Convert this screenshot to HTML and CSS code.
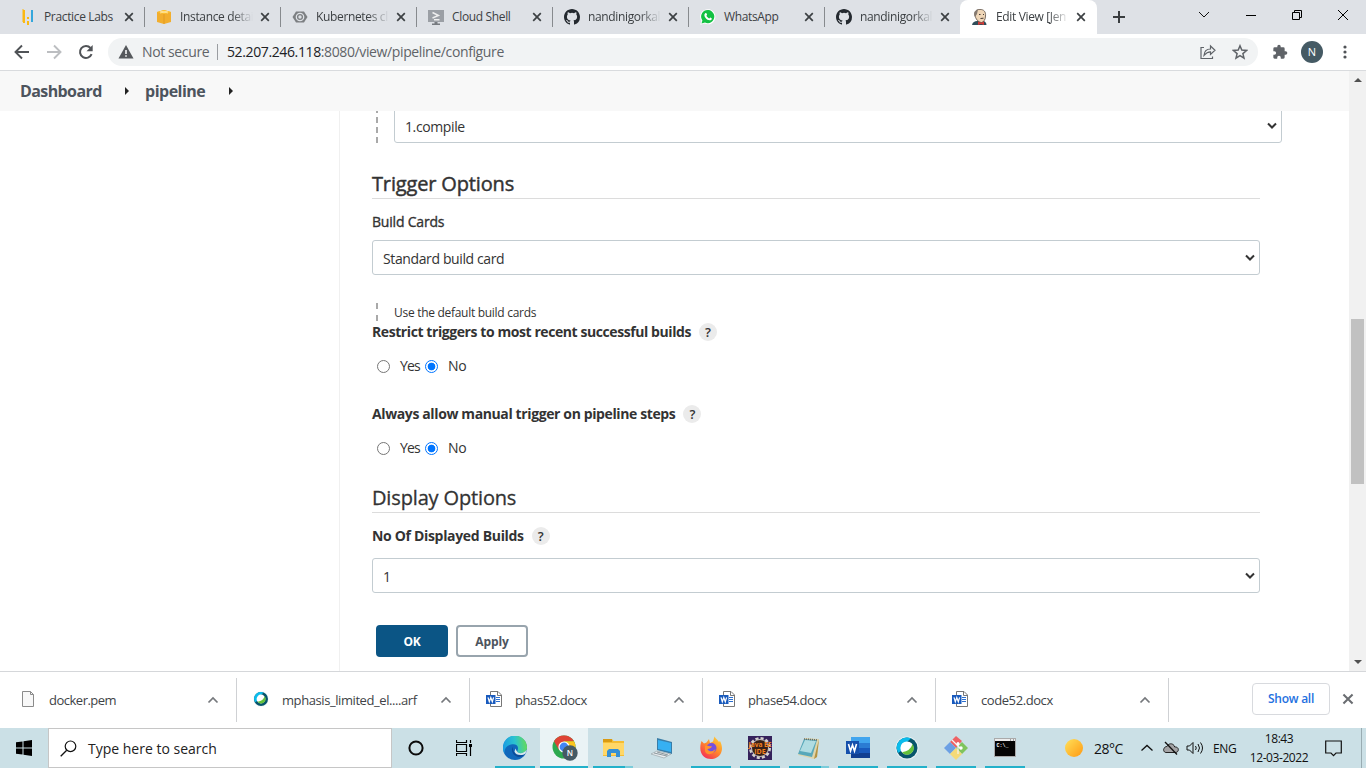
FILE: index.html
```html
<!DOCTYPE html>
<html lang="en">
<head>
<meta charset="utf-8">
<title>Edit View [Jenkins]</title>
<link rel="stylesheet" href="styles.css">
</head>
<body>
<svg class="defs" width="0" height="0">
  <defs>
    <symbol id="x" viewBox="0 0 10 10"><path d="M1.2 1.2 8.8 8.8M8.8 1.2 1.2 8.8" fill="none" stroke="currentColor" stroke-width="1.7"/></symbol>
    <symbol id="github" viewBox="0 0 16 16"><path fill="#24292f" d="M8 0C3.58 0 0 3.58 0 8c0 3.54 2.29 6.53 5.47 7.59.4.07.55-.17.55-.38 0-.19-.01-.82-.01-1.49-2.01.37-2.53-.49-2.69-.94-.09-.23-.48-.94-.82-1.13-.28-.15-.68-.52-.01-.53.63-.01 1.08.58 1.23.82.72 1.21 1.87.87 2.33.66.07-.52.28-.87.51-1.07-1.78-.2-3.64-.89-3.64-3.95 0-.87.31-1.59.82-2.15-.08-.2-.36-1.02.08-2.12 0 0 .67-.21 2.2.82a7.6 7.6 0 0 1 4 0c1.53-1.04 2.2-.82 2.2-.82.44 1.1.16 1.92.08 2.12.51.56.82 1.27.82 2.15 0 3.07-1.87 3.75-3.65 3.95.29.25.54.73.54 1.48 0 1.07-.01 1.93-.01 2.2 0 .21.15.46.55.38A8.01 8.01 0 0 0 16 8c0-4.42-3.58-8-8-8z"/></symbol>
    <symbol id="docx" viewBox="0 0 16 16"><path d="M4.500.5h7.500l3.500 3.500v11.500h-11z" fill="#fff" stroke="#777"/><path d="M11.500.5v4h4" fill="none" stroke="#777"/><path d="M10 6.500h4M10 8.500h4M10 10.500h4" stroke="#2b6fd0"/><rect y="4" width="9.500" height="9" fill="#185abd"/><path d="m2 6.300 1.300 4.400 1.500-4.200 1.500 4.200 1.300-4.400" fill="none" stroke="#fff" stroke-width="1.200"/></symbol>
    <symbol id="up" viewBox="0 0 12 8"><path d="M1.500 6.500 6 2l4.500 4.500" fill="none" stroke="currentColor" stroke-width="1.700"/></symbol>
    <symbol id="webex" viewBox="0 0 24 24"><circle cx="12" cy="12" r="11.500" fill="#eef5f7" opacity=".8"/><circle cx="12" cy="12" r="10.500" fill="#07556b"/><path d="M1.500 12A10.500 10.500 0 0 1 16 2.300L12 6 6 15 3 17z" fill="#0bbcec"/><circle cx="12" cy="12" r="6.600" fill="#fff"/><path d="M17.500 8A6.600 6.600 0 0 1 7 16.200Q15.500 15 17.500 8z" fill="#64c13a"/></symbol>
    <symbol id="down" viewBox="0 0 10 8"><path d="M1 1.500 5 5.500 9 1.500" fill="none" stroke="#333" stroke-width="2"/></symbol>
  </defs>
</svg>

<header class="tabs">
  <div class="tab"><svg class="fav" viewBox="0 0 16 16"><path d="M4 1v13M8 12v4" stroke="#fbb913" stroke-width="2"/><path d="M8 8v2" stroke="#fbb913" stroke-width="2"/><path d="M3 0v13" stroke="#fbb913"/><path d="M12 1v12" stroke="#35a7dc" stroke-width="2"/></svg><span class="title">Practice Labs</span><svg class="close"><use href="#x"/></svg></div>
  <div class="tab"><svg class="fav" viewBox="0 0 16 16"><path d="m8 1 7 2v10l-7 2-7-2V3z" fill="#f2ae2e"/><path d="m8 1 7 2-7 2-7-2z" fill="#ffc22e"/><path d="M8 5v10" stroke="#dc941c" stroke-width=".7"/><path d="m4 2 8 2M12 2 4 4" stroke="#fff0c0" stroke-width=".7"/></svg><span class="title">Instance detai</span><svg class="close"><use href="#x"/></svg></div>
  <div class="tab"><svg class="fav" viewBox="0 0 16 16"><path d="M4 2.500h8l3.500 5.500-3.500 5.500H4L.5 8z" fill="#7c7f82"/><circle cx="8" cy="8" r="3.700" fill="none" stroke="#dee1e6" stroke-width="1.300"/><circle cx="8" cy="8" r="1.700" fill="#dee1e6"/></svg><span class="title">Kubernetes cl</span><svg class="close"><use href="#x"/></svg></div>
  <div class="tab"><svg class="fav" viewBox="0 0 16 16"><path d="M0 1h16v12H0z" fill="#9b9fa5"/><path d="M6.500 13h3v1.500H12V16H4v-1.500h2.500z" fill="#777b80"/><path d="m4.500 3.500 6 3-6 2.500M6 10.800h5.500" stroke="#eee" stroke-width="1.400" fill="none"/></svg><span class="title t-plain">Cloud Shell</span><svg class="close"><use href="#x"/></svg></div>
  <div class="tab"><svg class="fav"><use href="#github"/></svg><span class="title">nandinigorkal</span><svg class="close"><use href="#x"/></svg></div>
  <div class="tab"><svg class="fav" viewBox="0 0 16 16"><path d="M.3 15.700 1.500 12A7.600 7.600 0 1 1 4.500 14.600z" fill="#fff"/><path d="m1.500 14.500.9-3A6.600 6.600 0 1 1 5 13.600z" fill="#13c143"/><path d="M5.200 4.200c1-.6 1.300-.1 1.900 1.500l-.7 1c.7 1.300 1.500 2.100 2.900 2.700l.9-1c1.700.8 2 .9 1.400 2-1.500 1.800-4.500.6-6-1.400C4.300 7.300 3.800 5.400 5.200 4.200z" fill="#fff"/></svg><span class="title t-plain">WhatsApp</span><svg class="close"><use href="#x"/></svg></div>
  <div class="tab last"><svg class="fav"><use href="#github"/></svg><span class="title">nandinigorkal</span><svg class="close"><use href="#x"/></svg></div>
  <div class="tab active"><svg class="fav" viewBox="0 0 16 16"><path d="M0 16c.5-3 3-4 5-4h6c2 0 3.500 2 3.500 4z" fill="#2f4d59"/><path d="M3 6C2 2 5 .4 8 .4c4 0 6 2.600 5.500 6.600 0 4-2 6-4 6.500C6 13 3.500 10 3 6z" fill="#efd6b7" stroke="#5b4c42" stroke-width=".8"/><path d="M3 8C.8 5 3 1 6 .6L5 5z" fill="#857a70"/><path d="M7 5.500h1.500M11 5.500h1M8.500 9.500l3-.3" stroke="#463a34"/><path d="m6 12.500 3 1.300 3-1.300V16l-3-1-3 1z" fill="#d23a36"/></svg><span class="title">Edit View [Jen</span><svg class="close"><use href="#x"/></svg></div>
  <svg class="plus" viewBox="0 0 12 12"><path d="M6 0v12M0 6h12" stroke="#3a3d40" stroke-width="2"/></svg>
  <div class="winctl">
    <svg width="12" height="12" viewBox="0 0 12 12"><path d="m1 3 5 5 5-5" fill="none" stroke="#111"/></svg>
    <svg width="10" height="12" viewBox="0 0 10 12"><path d="M0 6.500h10" stroke="#000"/></svg>
    <svg width="10" height="12" viewBox="0 0 10 12"><path d="M.5 3.500h7v7h-7zM2.500 3.500v-2h7v7h-2" fill="none" stroke="#000"/></svg>
    <svg width="10" height="12" viewBox="0 0 10 12"><path d="m0 1 10 10M10 1 0 11" stroke="#000"/></svg>
  </div>
</header>

<nav class="toolbar">
  <svg class="nav" viewBox="0 0 16 16"><path d="M15 8H2M8 1.500 1.500 8 8 14.500" fill="none" stroke="#505357" stroke-width="1.900"/></svg>
  <svg class="nav" viewBox="0 0 16 16"><path d="M1 8h13M8 1.500 14.500 8 8 14.500" fill="none" stroke="#bcbec1" stroke-width="1.900"/></svg>
  <svg class="nav" viewBox="0 0 16 16"><path d="M13.600 10.200A6 6 0 1 1 12.500 4" fill="none" stroke="#505357" stroke-width="2"/><path d="M14.700 1v6.200H8.500z" fill="#505357"/></svg>
  <div class="omnibox">
    <svg width="16" height="14" viewBox="0 0 16 14"><path d="M8 0 15.500 13.500H.5z" fill="#55585c"/><path d="M8 5v4M8 10.200v1.600" stroke="#fff" stroke-width="1.500"/></svg>
    <span class="insecure">Not secure</span><span class="bar"></span>
    <span class="url"><b>52.207.246.118</b>:8080/view/pipeline/configure</span>
    <svg class="share" width="16" height="16" viewBox="0 0 16 16"><path d="M4 3.500H1v11h11.500v-2M4 11.500c.3-4.500 3-6.500 6.500-6.500V2l4.500 4.200-4.500 4.200V7.800C8 7.800 6 9 4 11.500z" fill="none" stroke="#5f6368" stroke-width="1.200"/></svg>
    <svg width="16" height="16" viewBox="0 0 16 16"><path d="m8 1.800 1.800 4.300 4.700.4-3.600 3.100 1.100 4.600L8 11.700l-4 2.500 1.100-4.600-3.600-3.100 4.700-.4z" fill="none" stroke="#5f6368" stroke-width="1.500"/></svg>
  </div>
  <svg class="puzzle" viewBox="0 0 24 24"><path fill="#5f6368" d="M20.500 11H19V7a2 2 0 0 0-2-2h-4V3.500a2.500 2.500 0 0 0-5 0V5H4a2 2 0 0 0-2 2v3.800h1.500a2.700 2.700 0 0 1 0 5.400H2V20c0 1.100.9 2 2 2h3.800v-1.500a2.700 2.700 0 0 1 5.400 0V22H17a2 2 0 0 0 2-2v-4h1.500a2.500 2.500 0 0 0 0-5z"/></svg>
  <span class="avatar">N</span>
  <svg class="dots" viewBox="0 0 4 14"><g fill="#505357"><circle cx="2" cy="2" r="1.600"/><circle cx="2" cy="7" r="1.600"/><circle cx="2" cy="12" r="1.600"/></g></svg>
</nav>

<div class="viewport">
  <div class="page">
    <div class="crumbs"><span class="c1">Dashboard</span><i></i><span class="c2">pipeline</span><i></i></div>
    <div class="columns">
      <aside></aside>
      <main>
        <div class="nested"><div class="select clipped"><span class="v-compile">1.compile</span><svg class="chev"><use href="#down"/></svg></div></div>
        <h2 class="h-trigger">Trigger Options</h2>
        <div class="label medium"><span>Build Cards</span></div>
        <div class="select"><span>Standard build card</span><svg class="chev"><use href="#down"/></svg></div>
        <div class="note"><span>Use the default build cards</span></div>
        <div class="question"><span class="q1">Restrict triggers to most recent successful builds</span><span class="help">?</span></div>
        <div class="radios"><i class="radio"></i><span class="yes">Yes</span><i class="radio on"></i><span class="no">No</span></div>
        <div class="question second"><span class="q2">Always allow manual trigger on pipeline steps</span><span class="help">?</span></div>
        <div class="radios"><i class="radio"></i><span class="yes">Yes</span><i class="radio on"></i><span class="no">No</span></div>
        <h2 class="h-display">Display Options</h2>
        <div class="label"><span class="q3">No Of Displayed Builds</span><span class="help">?</span></div>
        <div class="select"><span>1</span><svg class="chev"><use href="#down"/></svg></div>
        <div class="buttons"><span class="btn primary">OK</span><span class="btn">Apply</span></div>
      </main>
    </div>
  </div>
  <div class="scroll"><i class="arr up"></i><i class="thumb"></i><i class="arr dn"></i></div>
</div>

<section class="downloads">
  <div class="dl"><svg class="dicon" viewBox="0 0 16 16"><path d="M2.500.5h8l3 3v12h-11z" fill="#f8f8f8" stroke="#8b8b8b"/><path d="M10.500.5v3h3" fill="none" stroke="#8b8b8b"/></svg><span class="d1">docker.pem</span><svg class="caret"><use href="#up"/></svg></div>
  <div class="dl"><svg class="dicon"><use href="#webex"/></svg><span class="d2">mphasis_limited_el....arf</span><svg class="caret"><use href="#up"/></svg></div>
  <div class="dl"><svg class="dicon"><use href="#docx"/></svg><span class="d3">phas52.docx</span><svg class="caret"><use href="#up"/></svg></div>
  <div class="dl"><svg class="dicon"><use href="#docx"/></svg><span class="d3">phase54.docx</span><svg class="caret"><use href="#up"/></svg></div>
  <div class="dl"><svg class="dicon"><use href="#docx"/></svg><span class="d3">code52.docx</span><svg class="caret"><use href="#up"/></svg></div>
  <span class="showall">Show all</span>
  <svg class="dclose"><use href="#x"/></svg>
</section>

<footer class="taskbar">
  <div class="start"><svg width="16" height="16" viewBox="0 0 16 16"><path d="M0 2.300 6.500 1.400v6.100H0zM7.500 1.200 16 0v7.500H7.500zM0 8.500h6.500v6.100L0 13.700zM7.500 8.500H16V16l-8.500-1.200z"/></svg></div>
  <div class="search"><svg width="17" height="17" viewBox="0 0 17 17"><circle cx="10.500" cy="6.300" r="5.300" fill="none" stroke="#111" stroke-width="1.200"/><path d="M6.700 10.200.7 16.200" stroke="#111" stroke-width="1.300"/></svg><span>Type here to search</span></div>
  <div class="sys"><svg width="16" height="16" viewBox="0 0 16 16"><circle cx="8" cy="8" r="6.600" fill="none" stroke="#0b0b0b" stroke-width="2"/></svg></div>
  <div class="sys"><svg width="16" height="16" viewBox="0 0 16 16"><path d="M.5 0v2.500h10V0M.5 16v-2.500h10V16M.5 4.500h10v7H.5zM14.500 0v3M14.500 7v9" fill="none" stroke="#000" stroke-width="1.200"/><path d="M13 4h3v3h-3z"/></svg></div>
  <div class="apps">
    <div class="app run"><svg viewBox="0 0 24 24"><defs><linearGradient id="eg" x1="0" y1=".4" x2="1" y2=".3"><stop stop-color="#1b9de2"/><stop offset=".5" stop-color="#2cc3cf"/><stop offset="1" stop-color="#67dc54"/></linearGradient></defs><circle cx="12" cy="12" r="12" fill="#1068bb"/><path d="M0 12A12 12 0 0 1 24 11c.4 5-5 7.500-9 5.500-1.500-1 0-2 0-4.500 0-3-3-4.500-7-3.500-5 1.300-7 5-6.500 9C.3 15.500 0 14 0 12z" fill="url(#eg)"/><path d="M10 11c-3 3 1 10 6 10 3 0 5-1.500 6-3-5 3-13 .5-12-7z" fill="#0c4a98"/><path d="M15 16.500c2.500 1.300 6 .8 9-3l-1.500 4c-4 3-10 1.500-11-2l1-3c.8 2 1 2.500 2.500 4z" fill="#d9e9ec"/></svg></div>
    <div class="app run current"><svg viewBox="0 0 26 26"><circle cx="12" cy="12" r="11.500" fill="#2da94f"/><path d="M2 6.300A11.500 11.500 0 0 1 22 6.300H12L7 15z" fill="#df4335"/><path d="M12 6.300h10A11.500 11.500 0 0 1 12 23.500L17 14z" fill="#fcc51c"/><circle cx="12" cy="12" r="5.600" fill="#fff"/><circle cx="12" cy="12" r="4.400" fill="#4285f4"/><circle cx="18" cy="18" r="7.700" fill="#455a64"/><text x="18" y="21.200" class="ntext">N</text></svg></div>
    <div class="app run split"><svg viewBox="0 0 24 24"><path d="M2 3h9l1.500 2H23v15H2z" fill="#f5bd33"/><path d="M2 3h9v3H2z" fill="#d99a13"/><path d="M2 7h21v12H2z" fill="#ffd767"/><path d="M6 21v-6l2-2h9l2 2v6h-4v-4h-5v4z" fill="#3590d4"/></svg></div>
    <div class="app"><svg viewBox="0 0 24 24"><path d="m7 2 15 4v12L7 14z" fill="#397da8"/><path d="m8 4 13 3v9L8 13z" fill="#36b0f2"/><path d="m7 15 14 3-7 4-13-4z" fill="#e9edf0" stroke="#9ba7ac" stroke-width=".7"/><path d="m4 17 13 3M7 16l11 3" stroke="#8d999e"/></svg></div>
    <div class="app run"><svg viewBox="0 0 24 24"><defs><linearGradient id="fg" x1=".9" y1="0" x2=".2" y2="1"><stop stop-color="#ffd43a"/><stop offset=".5" stop-color="#ff8a2b"/><stop offset="1" stop-color="#f42b59"/></linearGradient></defs><path d="M2.500 5 5 7.500l2.500-1L10 3l1 4 3-1.500L15.500.5C17 3 19 4 20 6l1-1c2.500 5 2.500 9 1 12-2 4-6 6-10 6-5.500 0-9.500-3.500-10.500-8.500C1 11 1.500 8 2.500 5z" fill="url(#fg)"/><circle cx="12.500" cy="12" r="5" fill="#7550df"/><path d="M6 10c2-1.500 4 .7 7 .3-1.500 3-3.500 2-4.500 3.200 2 2.500 5 2.500 8-.5-1.500 6-9 7-10.500 2z" fill="#ff922e"/></svg></div>
    <div class="app run"><svg viewBox="0 0 24 24"><path d="M0 0h24v24H0z" fill="#35225b"/><circle cx="12" cy="12" r="9.500" fill="none" stroke="#d5d2ce" stroke-width="3" stroke-dasharray="3 2"/><circle cx="12" cy="12" r="8.500" fill="#372018" stroke="#c7c4c1"/><text x="12" y="11" class="jtext" textLength="23" lengthAdjust="spacingAndGlyphs">Java EE</text><text x="12" y="18" class="jtext">IDE</text></svg></div>
    <div class="app run split"><svg viewBox="0 0 24 24"><path d="m8 2 14 1-2 18-3 2-16-4z" fill="#dfd5ab"/><path d="m7 3 13 1-5 17-14-3z" fill="#58a8ba"/><path d="m8 4 11 1-5 12-11-2z" fill="#b0dce2"/><path d="m7 3 14 1" stroke="#6c6b64" stroke-width="1.500" stroke-dasharray="1 1"/><path d="M22 3l-2 18-3 2z" fill="#b49343"/></svg></div>
    <div class="app run"><svg viewBox="0 0 24 24"><path d="M5 1h19v7H5z" fill="#41a5ee"/><path d="M5 7h19v6H5z" fill="#2b7cd3"/><path d="M5 12h19v5H5z" fill="#185abd"/><path d="M5 17h19v5H5z" fill="#103f91"/><path d="M0 5h13v13H0z" fill="#1550ac"/><path d="m2.500 8 2 7 2-6 2 6 2-7" fill="none" stroke="#fff" stroke-width="1.600"/></svg></div>
    <div class="app run"><svg viewBox="0 0 24 24"><use href="#webex"/></svg></div>
    <div class="app run"><svg viewBox="0 0 24 24"><path d="m12 0 6 5-6 7-6-6z" fill="#ee6264"/><path d="m6 6 6 6-6 6-6-6z" fill="#6ca0e4"/><path d="m18 6 6 6-6 6-6-6z" fill="#80c45c"/><path d="m12 12 6 6-6 6-6-6z" fill="#f5da78"/><path d="m8 4 9 9M14 6v12" stroke="#f4f4f4" stroke-width="1.200"/><circle cx="14" cy="8" r="1.700" fill="#fff"/><circle cx="17" cy="12" r="1.700" fill="#fff"/></svg></div>
    <div class="app run"><svg viewBox="0 0 24 24"><path d="M1 2h22v19H1z" fill="#aaa"/><path d="M2 5h20v15H2z" fill="#050505"/><path d="M2 3h20v2H2z" fill="#ececec"/><path d="M17 4h1M20 4h1" stroke="#555"/><text x="3.500" y="10.500" class="ctext">C:\_</text></svg></div>
  </div>
  <svg class="sun" viewBox="0 0 18 18"><defs><linearGradient id="sg" x1="0" y1="0" x2="1" y2="1"><stop stop-color="#ffe15a"/><stop offset="1" stop-color="#ff9912"/></linearGradient></defs><circle cx="9" cy="9" r="9" fill="url(#sg)"/></svg>
  <span class="temp">28°C</span>
  <svg class="t-up" viewBox="0 0 12 8"><path d="m.5 6.500 5.500-5 5.500 5" fill="none" stroke="#111" stroke-width="1.300"/></svg>
  <svg class="t-cloudoff" viewBox="0 0 16 14"><path d="M4 11.500C1 12 0 9 1 7.500 1.500 6 3 5.500 4 5.500 5 3 8 2 10 3.500c1 .7 1.500 1.500 1.700 2.500 3-.3 4.300 2 3.300 4-.5 1-1.500 1.500-3 1.500z" fill="#a4a4a6" stroke="#222"/><path d="m2 1 12 12.500" stroke="#111" stroke-width="1.300"/></svg>
  <svg class="t-sound" viewBox="0 0 18 14"><path d="M1 5h2.500L7 1.500v11L3.500 9H1z" fill="none" stroke="#111"/><path d="M9.500 5q1.500 2 0 4M12 3q3 4 0 8M14.500 1.500q4 5.500 0 11" fill="none" stroke="#111"/></svg>
  <span class="lang">ENG</span>
  <div class="clock"><span class="time">18:43</span><span class="date">12-03-2022</span></div>
  <svg class="t-note" viewBox="0 0 17 17"><path d="M.7 1h15.600v12H11l-2.500 2.700L6 13H.7z" fill="none" stroke="#111" stroke-width="1.200"/></svg>
  <i class="peek"></i>
</footer>
</body>
</html>
```
FILE: styles.css
```css
* { box-sizing: border-box; }
html, body { margin: 0; height: 100%; overflow: hidden; }
body {
  width: 1366px; height: 768px; display: flex; flex-direction: column;
  background: #fff; color: #333; font-family: "Open Sans", "Noto Sans", sans-serif; font-size: 14px;
}
svg { display: block; flex: none; }
svg.defs { position: absolute; }
span { white-space: nowrap; }

/* browser tabs */
.tabs { height: 34px; flex: none; display: flex; align-items: center; background: #dee1e6; padding-left: 8px; }
.tab { width: 136px; height: 34px; flex: none; display: flex; align-items: center; padding-left: 12px; }
.tab::after { content: ""; flex: none; width: 1px; height: 20px; background: #878a8e; margin-left: 10px; }
.tab.last::after, .tab.active::after { display: none; }
.fav { width: 16px; height: 16px; }
.title { flex: none; width: 76px; margin: 0 4px 0 8px; font-size: 12px; line-height: 16px; letter-spacing: -0.35px; color: #3c4043; mask-image: linear-gradient(90deg, #000 52px, transparent 73px); }
.tab:first-child .title, .t-plain { mask-image: none; }
.close { width: 10px; height: 10px; color: #3c4043; }
.active { width: 137px; background: #fff; border-radius: 8px 8px 0 0; }
.plus { width: 12px; height: 12px; margin-left: 16px; }
.winctl { margin-left: auto; display: flex; gap: 36px; padding: 0 18px 5px 0; }

/* address bar */
.toolbar { height: 37px; flex: none; display: flex; align-items: center; padding-left: 14px; border-bottom: 1px solid #d9dbde; }
.nav { width: 16px; height: 16px; margin-right: 16px; }
.omnibox { width: 1150px; height: 28px; margin-left: -2px; border-radius: 14px; background: #f1f3f4; display: flex; align-items: center; padding: 0 10px; }
.insecure { margin: 0 0 1px 8px; color: #5f6368; letter-spacing: -0.38px; width: 75px; }
.bar { width: 1px; height: 16px; background: #9a9da1; margin-right: 9px; }
.url { color: #5f6368; letter-spacing: -0.38px; margin-bottom: 1px; }
.url b { font-weight: 400; color: #202124; }
.share { margin: 0 16px 0 auto; }
.puzzle { width: 16px; height: 16px; margin-left: 14px; }
.avatar { width: 22px; height: 22px; border-radius: 50%; margin: 0 20px 0 13px; background: #455a64; color: #fff; font-size: 11px; line-height: 22px; text-align: center; }
.dots { width: 4px; height: 14px; }

/* page */
.viewport { height: 600px; flex: none; display: flex; }
.page { width: 1349px; display: flex; flex-direction: column; }
.crumbs { height: 40px; flex: none; background: #f8f8f8; padding-left: 20px; display: flex; align-items: center; font-size: 16px; font-weight: 700; color: #4d545d; letter-spacing: -0.6px; }
.crumbs .c1 { width: 105px; }
.crumbs .c2 { width: 84px; letter-spacing: -0.5px; }
.crumbs i { border: 4px solid transparent; border-left-color: #222; border-right: 0; margin-right: 16px; }
.columns { flex: 1; min-height: 0; display: flex; }
aside { width: 340px; border-right: 1px solid #f0f0f0; }
main { width: 888px; margin-left: 32px; }
.nested { height: 32px; margin-left: 4px; width: 906px; padding-left: 18px; overflow: hidden; background: repeating-linear-gradient(0deg, #a9a9a9 0 6px, #fff 6px 10px) 0 0 / 2px 100% no-repeat; }
.select { width: 888px; height: 35px; border: 1px solid #c3ccd1; border-radius: 3px; padding: 1px 4px 0 10px; display: flex; align-items: center; justify-content: space-between; color: #333; letter-spacing: -0.38px; }
.select.clipped { margin-top: -3px; }
.chev { width: 10px; height: 8px; }
h2 { margin: 0; border-bottom: 1px solid #dcdcdc; display: flex; align-items: flex-end; font-size: 20px; line-height: 28px; font-weight: 400; color: #333; letter-spacing: -0.15px; -webkit-text-stroke: 0.3px #333; }
.h-trigger { height: 56px; -webkit-text-stroke-width: 0.45px; }
.h-display { height: 42px; }
.label { height: 45px; display: flex; align-items: center; font-weight: 700; }
.label.medium { height: 41px; font-weight: 400; -webkit-text-stroke: 0.35px #333; padding-top: 4px; letter-spacing: -0.2px; }
.note { height: 18px; margin: 28px 0 0 4px; padding-left: 18px; display: flex; align-items: center; font-size: 12px; letter-spacing: -0.29px; background: repeating-linear-gradient(180deg, #a9a9a9 0 6px, #fff 6px 12px) 0 0 / 2px 100% no-repeat; }
.question { height: 22px; display: flex; align-items: center; font-weight: 700; }
.q1 { letter-spacing: -0.42px; margin-bottom: 1px; }
.q2 { letter-spacing: -0.38px; margin-bottom: 1px; }
.q3 { letter-spacing: -0.32px; }
.second { margin-top: 14px; }
.help { width: 18px; height: 18px; border-radius: 50%; background: #ebebeb; margin-left: 8px; font-size: 13px; font-weight: 600; line-height: 18px; text-align: center; }
.radios { height: 46px; padding-left: 5px; display: flex; align-items: center; }
.radio { width: 13px; height: 13px; border: 1px solid #767676; border-radius: 50%; margin: 1px 10px 0 0; }
.radio.on { border-color: #0075ff; background: radial-gradient(circle, #0075ff 0 3.5px, #fff 4.2px); }
.yes { width: 25px; letter-spacing: -0.8px; margin-bottom: 2px; }
.no { letter-spacing: -0.3px; margin-bottom: 2px; }
.buttons { padding: 32px 0 0 4px; display: flex; gap: 8px; }
.btn { width: 72px; height: 32px; border: 2px solid #98a4ad; border-radius: 4px; color: #4d545d; font-size: 12px; font-weight: 700; line-height: 29px; text-align: center; letter-spacing: -0.1px; }
.primary { background: #0b5585; border-color: #0b5585; color: #fff; letter-spacing: -0.3px; }
.scroll { width: 17px; background: #f1f1f1; display: flex; flex-direction: column; align-items: center; }
.arr { border: 4px solid transparent; }
.arr.up { border-bottom-color: #505050; border-top: 0; margin-top: 7px; }
.arr.dn { border-top-color: #505050; border-bottom: 0; margin: auto 0 7px; }
.thumb { width: 13px; height: 165px; background: #c1c1c1; margin-top: 237px; }

/* downloads shelf */
.downloads { height: 57px; flex: none; border-top: 1px solid #d5d7da; display: flex; align-items: center; padding: 0 12px 1px 4px; }
.dl { width: 233px; height: 44px; border-right: 1px solid #cfd1d4; display: flex; align-items: center; padding: 0 17px 0 16px; color: #404347; font-size: 13px; letter-spacing: -0.42px; }
.d1 { letter-spacing: -0.5px; }
.dicon { width: 16px; height: 16px; margin: 0 13px 1px 0; }
.caret { width: 12px; height: 8px; margin-left: auto; color: #75787c; }
.showall { width: 78px; height: 32px; border: 1px solid #d8dade; border-radius: 4px; margin: 0 12px 2px auto; color: #2470e0; font-size: 12px; font-weight: 600; letter-spacing: -0.25px; line-height: 30px; text-align: center; }
.dclose { width: 12px; height: 12px; margin-bottom: 2px; color: #6a6d71; }

/* taskbar */
.taskbar { height: 40px; flex: none; background: #cbe0e6; display: flex; align-items: center; color: #111; }
.start { width: 48px; display: flex; justify-content: center; }
.search { width: 344px; height: 40px; background: #fff; border: 1px solid #c6c6c6; display: flex; align-items: center; gap: 11px; padding-left: 11px; color: #222; }
.sys { width: 48px; display: flex; justify-content: center; }
.apps { display: flex; margin-left: 3px; }
.app { width: 49px; height: 40px; display: flex; align-items: center; justify-content: center; position: relative; padding-right: 2px; }
.app svg { width: 24px; height: 24px; }
.app.run::after { content: ""; position: absolute; left: 4px; bottom: 0; width: 40px; height: 2px; background: #22b1ca; }
.app.current { background: linear-gradient(90deg, #eaf3f5 48px, transparent 48px); padding-right: 0; }
.app.current svg { width: 26px; height: 26px; }
.app.current::after { left: 0; width: 48px; }
.app.split::after { background: linear-gradient(90deg, #22b1ca 32px, #7accda 32px); }
.ntext { font: 600 8px "Open Sans", sans-serif; fill: #fff; text-anchor: middle; }
.jtext { font: 700 7px "Open Sans", sans-serif; fill: #f58220; text-anchor: middle; }
.ctext { font: 700 5px "Liberation Mono", monospace; fill: #fff; }
.sun { width: 18px; height: 18px; margin-left: 35px; }
.temp { width: 35px; margin-left: 11px; letter-spacing: -0.5px; }
.t-up { width: 12px; height: 8px; margin-left: 12px; }
.t-cloudoff { width: 16px; height: 14px; margin-left: 10px; }
.t-sound { width: 18px; height: 14px; margin-left: 7px; }
.lang { width: 33px; margin-left: 9px; font-size: 12px; letter-spacing: -0.3px; }
.clock { width: 66px; display: flex; flex-direction: column; align-items: center; font-size: 12px; line-height: 19px; letter-spacing: -0.42px; }
.t-note { width: 17px; height: 17px; margin-left: 13px; }
.peek { width: 1px; height: 40px; background: #99acb2; margin-left: auto; margin-right: 4px; }
```
